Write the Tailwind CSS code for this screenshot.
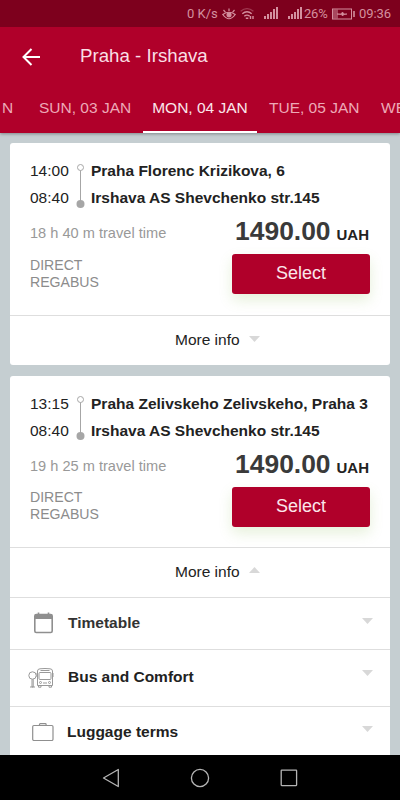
<!DOCTYPE html>
<html lang="en">
<head>
<meta charset="utf-8">
<meta name="viewport" content="width=device-width">
<title>Praha - Irshava</title>
<script src="https://cdn.jsdelivr.net/npm/@tailwindcss/browser@4"></script>
</head>
<body class="w-[400px] h-[800px] overflow-hidden bg-[#c5ced1] font-['Liberation_Sans',Arial,sans-serif] text-[#222] whitespace-nowrap flex flex-col">
<header class="h-[133px] shrink-0 bg-[#b0002a] flex flex-col relative z-10 shadow-[0_1px_3px_rgba(0,0,0,0.35)]">
  <div class="h-[27px] shrink-0 bg-[#7d001d] flex items-center pl-[187px] pt-[1px] text-[13px] text-[#d4909f] font-[Roboto,sans-serif]">
    <span class="w-[35px] shrink-0">0 K/s</span>
    <svg class="w-[14px] h-[12px] shrink-0" viewBox="0 0 14 12" fill="none" stroke="#d4909f" stroke-width="1.200"><path d="M.8 6.500Q7 2 13.200 6.500Q7 15 .8 6.500Z"/><circle cx="7" cy="6.800" r="2" fill="#d4909f"/><path d="M1.500 2 3.500 4.300M7 .5V3M12.500 2 10.500 4.300"/></svg>
    <svg class="w-[15px] h-[14px] ml-[4px] shrink-0" viewBox="0 0 15 14" fill="none" stroke="#d4909f" stroke-width="1.400"><path d="M.6 4.200Q7 -1 13.400 4.200" opacity=".4"/><path d="M2.300 6.800Q7 2.800 11.700 6.800M4.300 9.200Q7 7 9.700 9.200"/><path d="M5.800 11.200h2.500M10.500 9v3M13 9v3"/></svg>
    <svg class="w-[14px] h-[13px] ml-[9px] mt-[-3px] shrink-0" viewBox="0 0 14 13" fill="#d4909f"><path d="M0 10h2v3H0zM3 8h2v5H3zM6 6h2v7H6zM9 3h2v10H9zM12 1h2v12h-2z"/></svg>
    <svg class="w-[14px] h-[13px] ml-[10px] mt-[-3px] shrink-0" viewBox="0 0 14 13" fill="#d4909f"><path d="M0 10h2v3H0zM3 8h2v5H3zM6 6h2v7H6zM9 3h2v10H9zM12 1h2v12h-2z"/></svg>
    <span class="w-[28px] ml-[2px] tracking-[-0.200px] shrink-0">26%</span>
    <svg class="w-[23px] h-[12px] shrink-0" viewBox="0 0 23 12" fill="none" stroke="#d4909f"><rect x=".5" y="1" width="19" height="10"/><path d="M1 1.500h5v9H1z" fill="#d4909f" fill-opacity=".5" stroke="none"/><path d="M5 6h4l1.500-2L12 6h3l-3 .5L10.500 8 9.500 6.500z" fill="#d4909f" stroke-width=".7"/><path d="M22 3v6" stroke-width="1.600"/></svg>
    <span class="ml-[4px] tracking-[-0.100px]">09:36</span>
  </div>
  <div class="h-[57px] shrink-0 flex items-center pl-[22px] text-[#f9dfe5]">
    <svg class="w-[18px] h-[18px] mt-[2px]" viewBox="0 0 18 18" fill="none" stroke="#fff" stroke-width="2"><path d="M18 9H2M9.500 1 1.500 9l8 8"/></svg>
    <h1 class="ml-[40px] mt-[1px] text-[18.700px]">Praha - Irshava</h1>
  </div>
  <nav class="flex-1 flex text-[15.500px] text-[#eda9b7] leading-[48px] overflow-hidden">
    <span class="w-[39px] pl-[2px] shrink-0">N</span>
    <span class="w-[104px] shrink-0">SUN, 03 JAN</span>
    <span class="w-[114px] shrink-0 text-center text-[#fbe6ea] border-b-2 border-white">MON, 04 JAN</span>
    <span class="w-[124px] pl-[12px] shrink-0">TUE, 05 JAN</span>
    <span class="shrink-0">WED</span>
  </nav>
</header>
<main class="flex-1 min-h-0 overflow-hidden px-[10px] pt-[10px] flex flex-col gap-[11px]">
  <article class="bg-white rounded-[3px] h-[222px] shrink-0">
    <div class="h-[173px] border-b border-[#dedede] px-[20px] pt-[14px]">
      <div class="flex h-[54px] text-[15.500px] leading-[27px]">
        <div class="w-[46px] text-[#222]"><p>14:00</p><p>08:40</p></div>
        <svg class="w-[9px] h-[46px] mt-[6px]" viewBox="0 0 9 46"><path d="M4.500 7v32" stroke="#a6a6a6"/><circle cx="4.500" cy="4.500" r="3" fill="#fff" stroke="#a6a6a6"/><circle cx="4.500" cy="41" r="4" fill="#a6a6a6"/></svg>
        <div class="ml-[6px] font-bold text-[15.500px]"><p>Praha Florenc Krizikova, 6</p><p>Irshava AS Shevchenko str.145</p></div>
      </div>
      <div class="flex h-[43px] justify-between items-center">
        <span class="text-[14.600px] text-[#999] pt-[2px]">18 h 40 m travel time</span>
        <p class="font-bold text-[26.400px] text-[#3a3a3a] leading-[30px] mt-[1px] mr-[1px]">1490.00<span class="text-[15px] text-[#222] ml-[6px]">UAH</span></p>
      </div>
      <div class="flex justify-between">
        <p class="text-[14.100px] leading-[17px] text-[#8c8c8c] pt-[3px]">DIRECT<br>REGABUS</p>
        <button class="w-[138px] h-[40px] rounded-[3px] bg-[#b0002a] text-[#fbe6ea] text-[18px] pb-[1px] shadow-[0_6px_14px_rgba(130,180,70,0.2)]">Select</button>
      </div>
    </div>
    <div class="h-[47px] flex items-center pl-[165px] text-[15.500px]">More info<svg class="w-[11px] h-[6px] ml-[9px] mt-[-1px]" viewBox="0 0 11 6"><path d="M0 0h11L5.500 6z" fill="#d8d8d8"/></svg></div>
  </article>
  <article class="bg-white rounded-t-[3px] h-[400px] shrink-0">
    <div class="h-[172px] border-b border-[#dedede] px-[20px] pt-[14px]">
      <div class="flex h-[54px] text-[15.500px] leading-[27px]">
        <div class="w-[46px] text-[#222]"><p>13:15</p><p>08:40</p></div>
        <svg class="w-[9px] h-[46px] mt-[5px]" viewBox="0 0 9 46"><path d="M4.500 7v32" stroke="#a6a6a6"/><circle cx="4.500" cy="4.500" r="3" fill="#fff" stroke="#a6a6a6"/><circle cx="4.500" cy="41" r="4" fill="#a6a6a6"/></svg>
        <div class="ml-[6px] font-bold text-[15.500px]"><p class="tracking-[0.010px]">Praha Zelivskeho Zelivskeho, Praha 3</p><p>Irshava AS Shevchenko str.145</p></div>
      </div>
      <div class="flex h-[43px] justify-between items-center">
        <span class="text-[14.600px] text-[#999] pt-[2px]">19 h 25 m travel time</span>
        <p class="font-bold text-[26.400px] text-[#3a3a3a] leading-[30px] mr-[1px]">1490.00<span class="text-[15px] text-[#222] ml-[6px]">UAH</span></p>
      </div>
      <div class="flex justify-between">
        <p class="text-[14.100px] leading-[17px] text-[#8c8c8c] pt-[2px]">DIRECT<br>REGABUS</p>
        <button class="w-[138px] h-[40px] rounded-[3px] bg-[#b0002a] text-[#fbe6ea] text-[18px] pb-[2px] shadow-[0_6px_14px_rgba(130,180,70,0.2)]">Select</button>
      </div>
    </div>
    <div class="h-[50px] border-b border-[#dedede] flex items-center pl-[165px] pb-[2px] text-[15.500px]">More info<svg class="w-[11px] h-[6px] ml-[9px] mt-[-4px]" viewBox="0 0 11 6"><path d="M0 6h11L5.500 0z" fill="#d8d8d8"/></svg></div>
    <div class="h-[52px] border-b border-[#dedede] flex items-center pl-[18px] pr-[17px] font-bold text-[15.500px] text-[#333]">
      <svg class="w-[26px] h-[22px] mt-[-1px]" viewBox="0 0 26 22" fill="none" stroke="#8f8f8f" stroke-width="1.600"><rect x="6.800" y="2.500" width="17.400" height="18" rx="1.500"/><path d="M7 2.500h17v4.500H7z" fill="#8f8f8f" stroke="none"/><path d="M10.500.5v4M20.500.5v4"/></svg>
      <span class="ml-[14px] mt-[-2px]">Timetable</span>
      <svg class="w-[11px] h-[6px] ml-auto mt-[-6px]" viewBox="0 0 11 6"><path d="M0 0h11L5.500 6z" fill="#d8d8d8"/></svg>
    </div>
    <div class="h-[57px] border-b border-[#dedede] flex items-center pl-[18px] pr-[17px] font-bold text-[15.500px] text-[#222]">
      <svg class="w-[26px] h-[20px]" viewBox="0 0 26 20" fill="none" stroke="#999"><circle cx="4.500" cy="7.500" r="3.700"/><path d="M4 11.200V19h1.200v-7.800M2 19h5"/><path d="M9.500 17.500V3Q9.500 1 12 .8q5-.6 10 0Q24.500 1 24.500 3v14.500zM10.500 17.500v1.700h2.500v-1.700M21 17.500v1.700h2.500v-1.700M12.500 2.500h9"/><rect x="11" y="4.500" width="12" height="7" rx="1"/><circle cx="12.500" cy="14.500" r="1"/><circle cx="21.500" cy="14.500" r="1"/><path d="M15 15h4M9 5v4M25 5v4"/></svg>
      <span class="ml-[14px] mt-[-2px]">Bus and Comfort</span>
      <svg class="w-[11px] h-[6px] ml-auto mt-[-10px]" viewBox="0 0 11 6"><path d="M0 0h11L5.500 6z" fill="#d8d8d8"/></svg>
    </div>
    <div class="h-[51px] flex items-center pl-[18px] pr-[17px] font-bold text-[15.500px] text-[#222]">
      <svg class="w-[26px] h-[18px] mt-[-1px]" viewBox="0 0 26 18" fill="none" stroke="#8f8f8f" stroke-width="1.200"><rect x="4.700" y="2.500" width="20.300" height="15" rx="1.200"/><path d="M11.500 2.500V1.400q0-.8.8-.8h5q.8 0 .8.8V2.500"/></svg>
      <span class="ml-[13px] mt-[-2px]">Luggage terms</span>
      <svg class="w-[11px] h-[6px] ml-auto mt-[-7px]" viewBox="0 0 11 6"><path d="M0 0h11L5.500 6z" fill="#d8d8d8"/></svg>
    </div>
  </article>
</main>
<footer class="h-[45px] shrink-0 bg-black flex items-center pl-[102px]">
  <svg class="w-[18px] h-[20px]" viewBox="0 0 18 20" fill="none" stroke="#b5b5b5" stroke-width="1.300" stroke-linejoin="round"><path d="M16.300 1.500v17L1.500 10z"/></svg>
  <svg class="w-[20px] h-[20px] ml-[70px]" viewBox="0 0 20 20" fill="none" stroke="#b5b5b5" stroke-width="1.300"><circle cx="10" cy="10" r="8.600"/></svg>
  <svg class="w-[18px] h-[18px] ml-[70px]" viewBox="0 0 18 18" fill="none" stroke="#b5b5b5" stroke-width="1.300"><rect x="1.200" y="1.200" width="15.400" height="15.400" rx=".5"/></svg>
</footer>
</body>
</html>
